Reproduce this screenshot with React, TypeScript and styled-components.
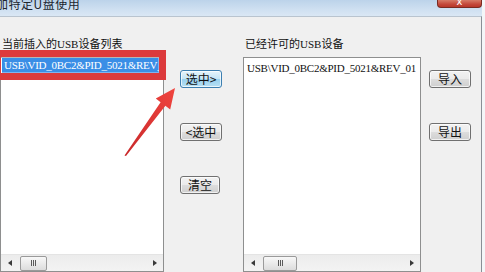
import styled, { createGlobalStyle } from "styled-components";

const Global = createGlobalStyle`
  html, body {
    margin: 0;
    padding: 0;
    background: #ffffff;
    overflow: hidden;
  }
  * {
    box-sizing: border-box;
  }
`;

const Screen = styled.div`
  position: relative;
  width: 485px;
  height: 272px;
  overflow: hidden;
  background: #f4f6f8;
  font-family: "Liberation Serif", "Noto Sans CJK SC", serif;
  color: #1a1a1a;
`;

const Window = styled.div`
  width: 482px;
  height: 272px;
  display: flex;
  flex-direction: column;
`;

const TitleBar = styled.div`
  height: 16px;
  display: flex;
  align-items: flex-start;
  justify-content: space-between;
  background: linear-gradient(180deg, #bcd3ea 0%, #cfe0f1 60%, #dae7f4 100%);
  overflow: hidden;
`;

const Title = styled.span`
  font-family: "Noto Sans CJK SC", sans-serif;
  font-size: 12px;
  line-height: 12px;
  margin: -2px 0 0 -4px;
  color: #20262e;
  letter-spacing: 0.5px;
`;

const CloseBtn = styled.div`
  width: 45px;
  height: 8px;
  border: 1px solid #7a2b22;
  border-top: none;
  border-radius: 0 0 4px 4px;
  background: linear-gradient(180deg, #d67b68 0%, #c4483a 60%, #b8372a 100%);
  display: flex;
  justify-content: center;
  overflow: hidden;
  color: #ffffff;
  font-family: "DejaVu Sans", sans-serif;
  font-size: 10px;
  line-height: 4px;
`;

const Body = styled.div`
  flex: 1;
  display: flex;
  background: #f0f0f0;
  border-top: 1px solid #b9c4cf;
  border-right: 1px solid #8a8f96;
  overflow: hidden;
`;

const ListColumn = styled.div<{ $w: number }>`
  width: ${(p) => p.$w}px;
  flex-shrink: 0;
  display: flex;
  flex-direction: column;
`;

const Label = styled.div`
  margin-top: 18px;
  height: 16px;
  line-height: 16px;
  padding-left: 2px;
  font-family: "Noto Sans CJK SC", sans-serif;
  font-size: 11px;
  white-space: nowrap;
  color: #111;
`;

const LatinPart = styled.span`
  font-family: "Liberation Serif", serif;
  font-size: 11px;
`;

const ListBox = styled.div`
  margin-top: 6px;
  height: 223px;
  border: 1px solid #8e8f8f;
  background: #ffffff;
  display: flex;
  flex-direction: column;
`;

const ListArea = styled.div`
  flex: 1;
  padding: 0 1px;
  overflow: hidden;
`;

const Row = styled.div<{ $selected?: boolean }>`
  height: 15px;
  line-height: 15px;
  padding-left: 2px;
  white-space: nowrap;
  font-family: "Liberation Serif", serif;
  font-size: 11px;
  letter-spacing: -0.25px;
  color: ${(p) => (p.$selected ? "#ffffff" : "#111111")};
  background: ${(p) => (p.$selected ? "#3a8ee6" : "transparent")};
  margin-top: ${(p) => (p.$selected ? 0 : 3)}px;
`;

const HScroll = styled.div`
  height: 17px;
  display: flex;
  align-items: center;
  background: linear-gradient(180deg, #ececec, #f3f3f3);
  border-top: 1px solid #e4e4e4;
`;

const ArrowCell = styled.div`
  width: 17px;
  display: flex;
  justify-content: center;
  align-items: center;
`;

const Tri = styled.div<{ $dir: "left" | "right" }>`
  width: 0;
  height: 0;
  border-top: 3px solid transparent;
  border-bottom: 3px solid transparent;
  ${(p) =>
    p.$dir === "left"
      ? "border-right: 4px solid #3a3a3a;"
      : "border-left: 4px solid #3a3a3a;"}
`;

const Track = styled.div`
  flex: 1;
  display: flex;
  padding-left: 2px;
`;

const Thumb = styled.div<{ $w: number }>`
  width: ${(p) => p.$w}px;
  height: 15px;
  border: 1px solid #9a9a9a;
  border-radius: 2px;
  background: linear-gradient(180deg, #f8f8f8, #dcdcdc);
  display: flex;
  justify-content: center;
  align-items: center;
  gap: 1px;
`;

const Grip = styled.span`
  width: 1px;
  height: 6px;
  background: #5a5a5a;
`;

const ButtonColumn = styled.div<{ $w: number; $pad: number }>`
  width: ${(p) => p.$w}px;
  flex-shrink: 0;
  display: flex;
  flex-direction: column;
  padding-left: ${(p) => p.$pad}px;
  padding-top: 53px;
  gap: 35px;
`;

const Button = styled.div<{ $primary?: boolean; $w?: number }>`
  width: ${(p) => p.$w ?? 42}px;
  height: 18px;
  border: 1px solid ${(p) => (p.$primary ? "#3c7fb1" : "#707070")};
  border-radius: 3px;
  background: ${(p) =>
    p.$primary
      ? "linear-gradient(180deg, #e5f4fc 0%, #c4e5f6 50%, #98d1ef 51%, #b7e0f4 100%)"
      : "linear-gradient(180deg, #f2f2f2 0%, #ebebeb 50%, #dddddd 51%, #cfcfcf 100%)"};
  box-shadow: inset 0 0 0 1px rgba(255, 255, 255, 0.7);
  display: flex;
  align-items: center;
  justify-content: center;
  font-family: "Noto Sans CJK SC", sans-serif;
  font-size: 12px;
  line-height: 16px;
  color: #111;
  white-space: nowrap;
`;

const Highlight = styled.div`
  position: absolute;
  left: -6px;
  top: 50px;
  width: 172px;
  height: 30px;
  border: 7px solid #dc3a3c;
  box-shadow: inset 0 0 0 1px rgba(255, 255, 255, 0.35);
`;

const ArrowSvg = styled.svg`
  position: absolute;
  left: 0;
  top: 0;
  pointer-events: none;
`;

const Scrollbar = ({ left, width }: { left: number; width: number }) => (
  <HScroll>
    <ArrowCell>
      <Tri $dir="left" />
    </ArrowCell>
    <Track style={{ paddingLeft: left }}>
      <Thumb $w={width}>
        <Grip />
        <Grip />
        <Grip />
      </Thumb>
    </Track>
    <ArrowCell>
      <Tri $dir="right" />
    </ArrowCell>
  </HScroll>
);

export default function App() {
  return (
    <>
      <Global />
      <Screen>
        <Window>
          <TitleBar>
            <Title>加特定U盘使用</Title>
            <CloseBtn>x</CloseBtn>
          </TitleBar>
          <Body>
            <ListColumn $w={164}>
              <Label>
                当前插入的<LatinPart>USB</LatinPart>设备列表
              </Label>
              <ListBox>
                <ListArea>
                  <Row $selected>USB\VID_0BC2&amp;PID_5021&amp;REV_01</Row>
                </ListArea>
                <Scrollbar left={2} width={27} />
              </ListBox>
            </ListColumn>

            <ButtonColumn $w={79} $pad={16}>
              <Button $primary>选中&gt;</Button>
              <Button>&lt;选中</Button>
              <Button $w={40}>清空</Button>
            </ButtonColumn>

            <ListColumn $w={178}>
              <Label>
                已经许可的<LatinPart>USB</LatinPart>设备
              </Label>
              <ListBox>
                <ListArea>
                  <Row>USB\VID_0BC2&amp;PID_5021&amp;REV_01</Row>
                </ListArea>
                <Scrollbar left={2} width={34} />
              </ListBox>
            </ListColumn>

            <ButtonColumn $w={60} $pad={8}>
              <Button>导入</Button>
              <Button>导出</Button>
            </ButtonColumn>
          </Body>
        </Window>

        <Highlight />

        <ArrowSvg width="485" height="272" viewBox="0 0 485 272">
          <defs>
            <linearGradient id="arrowFill" x1="0" y1="1" x2="1" y2="0">
              <stop offset="0" stopColor="#c8282a" />
              <stop offset="1" stopColor="#f0453f" />
            </linearGradient>
          </defs>
          <polygon
            points="124.5,155.5 160.6,102.2 155.8,98.6 175,88 170.2,109.4 165.4,105.8 126,156"
            fill="url(#arrowFill)"
          />
        </ArrowSvg>
      </Screen>
    </>
  );
}
